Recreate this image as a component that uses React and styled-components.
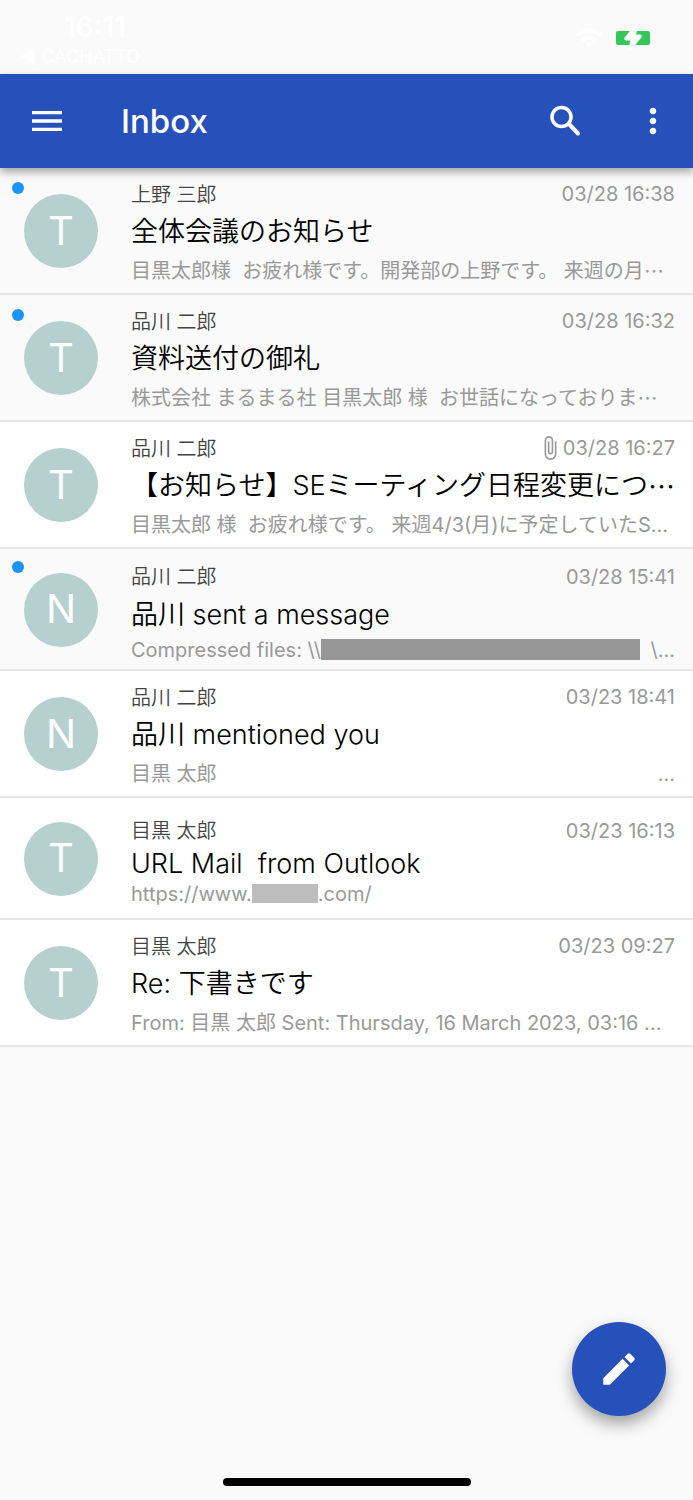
import React from "react";
import styled, { createGlobalStyle } from "styled-components";
import { MdMenu, MdMoreVert, MdEdit, MdAttachFile } from "react-icons/md";

const mails = [
  {
    id: 1,
    initial: "T",
    sender: "上野 三郎",
    date: "03/28 16:38",
    subject: "全体会議のお知らせ",
    preview: "目黒太郎様  お疲れ様です。開発部の上野です。 来週の月",
    previewCut: true,
    unread: true,
  },
  {
    id: 2,
    initial: "T",
    sender: "品川 二郎",
    date: "03/28 16:32",
    subject: "資料送付の御礼",
    preview: "株式会社 まるまる社 目黒太郎 様  お世話になっておりま",
    previewCut: true,
    unread: true,
  },
  {
    id: 3,
    initial: "T",
    sender: "品川 二郎",
    date: "03/28 16:27",
    subject: "【お知らせ】SEミーティング日程変更につ",
    subjectCut: true,
    preview: "目黒太郎 様  お疲れ様です。 来週4/3(月)に予定していたS...",
    attachment: true,
  },
  {
    id: 4,
    initial: "N",
    sender: "品川 二郎",
    date: "03/28 15:41",
    subject: "品川 sent a message",
    preview: "Compressed files: \\\\",
    redacted: "path",
    previewTail: "\\...",
    latinPreview: true,
    unread: true,
  },
  {
    id: 5,
    initial: "N",
    sender: "品川 二郎",
    date: "03/23 18:41",
    subject: "品川 mentioned you",
    preview: "目黒 太郎",
    previewTail: "...",
  },
  {
    id: 6,
    initial: "T",
    sender: "目黒 太郎",
    date: "03/23 16:13",
    subject: "URL Mail  from Outlook",
    preview: "https://www.",
    redacted: "domain",
    previewAfter: ".com/",
    latinSubject: true,
    latinPreview: true,
  },
  {
    id: 7,
    initial: "T",
    sender: "目黒 太郎",
    date: "03/23 09:27",
    subject: "Re: 下書きです",
    preview: "From: 目黒 太郎 Sent: Thursday, 16 March 2023, 03:16 ...",
  },
];

const WifiIcon = () => (
  <svg width="28" height="22" viewBox="0 0 28 22" fill="none" stroke="#fff" strokeWidth="4" aria-hidden="true">
    <path d="M2 8.500a17 17 0 0 1 24 0" />
    <path d="M7 13.500a10 10 0 0 1 14 0" />
    <path d="M14 21l-4-4.500a6 6 0 0 1 8 0z" fill="#fff" stroke="none" />
  </svg>
);

const BatteryIcon = () => (
  <svg width="42" height="24" viewBox="0 0 42 24" aria-hidden="true">
    <rect x="1" y="3" width="38" height="18" rx="5" fill="#fff" />
    <path d="M40 9q2 3 0 6z" fill="#fff" />
    <rect x="3" y="5" width="34" height="14" rx="2" fill="#34c759" />
    <path d="M21 0 12 11q-2 3 1 3.500h4L16 24h2L28 12q2-3-1-3.500h-4L25 0z" fill="#fff" />
  </svg>
);

const SearchIcon = () => (
  <svg width="40" height="40" viewBox="0 0 40 40" fill="none" stroke="currentColor" strokeWidth="3.500" aria-hidden="true">
    <circle cx="16.500" cy="16" r="9.500" />
    <path d="M24 23l9 9.500" strokeWidth="4" strokeLinecap="round" />
  </svg>
);

const MailItem = ({ mail }) => (
  <Row $unread={mail.unread}>
    <Avatar>
      {mail.unread && <UnreadDot />}
      {mail.initial}
    </Avatar>
    <Body>
      <Top>
        <Sender>{mail.sender}</Sender>
        <Received>
          {mail.attachment && <MdAttachFile size={26} />}
          {mail.date}
        </Received>
      </Top>
      <Subject $latin={mail.latinSubject}>
        {mail.subject}
        {mail.subjectCut && <WideDots>…</WideDots>}
      </Subject>
      <Preview $latin={mail.latinPreview}>
        {mail.preview}
        {mail.previewCut && <WideDots>…</WideDots>}
        {mail.redacted && <Redacted $kind={mail.redacted} />}
        {mail.previewAfter}
        {mail.previewTail && <Tail>{mail.previewTail}</Tail>}
      </Preview>
    </Body>
  </Row>
);

const App = () => {
  return (
    <Screen>
      <GlobalStyle />
      <StatusBar>
        <Clock>
          <Time>16:11</Time>
          <BackApp href="#cachatto">◀ CACHATTO</BackApp>
        </Clock>
        <Indicators>
          <WifiIcon />
          <BatteryIcon />
        </Indicators>
      </StatusBar>
      <Toolbar>
        <IconButton aria-label="Menu">
          <MdMenu size={40} />
        </IconButton>
        <Title>Inbox</Title>
        <IconButton aria-label="Search">
          <SearchIcon />
        </IconButton>
        <IconButton aria-label="More">
          <MdMoreVert size={40} />
        </IconButton>
      </Toolbar>
      <MailList>
        {mails.map((mail) => (
          <MailItem key={mail.id} mail={mail} />
        ))}
      </MailList>
      <Compose aria-label="Compose">
        <MdEdit size={42} />
      </Compose>
      <HomeIndicator />
    </Screen>
  );
};

const GlobalStyle = createGlobalStyle`
  * {
    box-sizing: border-box;
  }
  body {
    margin: 0;
    background-color: #fafafa;
    font-family: Inter, "Noto Sans CJK JP", sans-serif;
    color: #000;
  }
`;

const Screen = styled.div`
  display: flex;
  flex-direction: column;
  min-height: 100vh;
`;

const StatusBar = styled.div`
  display: flex;
  justify-content: space-between;
  align-items: flex-start;
  height: 74px;
  padding: 10px 38px 0 20px;
  color: #fff;
`;

const Clock = styled.div`
  display: flex;
  flex-direction: column;
  align-items: center;
`;

const Time = styled.span`
  padding-left: 30px;
  font-size: 28px;
  font-weight: 600;
  line-height: 34px;
`;

const BackApp = styled.a`
  font-size: 18px;
  line-height: 26px;
  color: inherit;
  text-decoration: none;
`;

const Indicators = styled.div`
  display: flex;
  align-items: center;
  gap: 10px;
  padding-top: 16px;
`;

const Toolbar = styled.header`
  position: relative;
  display: flex;
  align-items: center;
  height: 94px;
  padding: 0 16px 0 23px;
  color: #fff;
  background-color: #2751ba;
  box-shadow: 0 4px 8px rgba(0, 0, 0, 0.35);
`;

const IconButton = styled.button`
  display: flex;
  align-items: center;
  justify-content: center;
  width: 48px;
  height: 48px;
  padding: 0;
  border: 0;
  color: inherit;
  background: none;
  cursor: pointer;
  & + & {
    margin-left: 40px;
  }
`;

const Title = styled.h1`
  flex: 1;
  margin: 0;
  padding-left: 50px;
  font-size: 33px;
  font-weight: 500;
`;

const MailList = styled.ul`
  flex: 1;
  margin: 0;
  padding: 0;
  list-style: none;
`;

const Row = styled.li`
  display: flex;
  align-items: center;
  gap: 33px;
  min-height: 122px;
  padding: 5px 18px 4px 24px;
  border-bottom: 2px solid #e6e6e6;
  background-color: ${(props) => (props.$unread ? "#fafafa" : "#fff")};
`;

const Avatar = styled.div`
  position: relative;
  display: flex;
  flex-shrink: 0;
  align-items: center;
  justify-content: center;
  width: 74px;
  height: 74px;
  padding-bottom: 2px;
  border-radius: 50%;
  font-size: 40px;
  color: #fff;
  background-color: #b6d0cf;
`;

const UnreadDot = styled.span`
  position: absolute;
  top: -12px;
  left: -12px;
  width: 12px;
  height: 12px;
  border-radius: 50%;
  background-color: #1b93f5;
`;

const Body = styled.div`
  flex: 1;
  min-width: 0;
  padding-top: 4px;
`;

const Top = styled.div`
  display: flex;
  align-items: center;
  justify-content: space-between;
  height: 34px;
`;

const Sender = styled.span`
  padding-bottom: 2px;
  font-size: 20px;
  font-weight: 350;
  color: #444;
`;

const Received = styled.span`
  display: flex;
  align-items: center;
  font-size: 20px;
  color: #999;
`;

const Subject = styled.div`
  display: flex;
  overflow: hidden;
  font-size: 27px;
  font-weight: 350;
  line-height: ${(props) => (props.$latin ? "32px" : "42px")};
  white-space: pre;
`;

const Preview = styled.div`
  display: flex;
  align-items: center;
  overflow: hidden;
  font-size: 20px;
  line-height: ${(props) => (props.$latin ? "28px" : "36px")};
  white-space: pre;
  color: #999;
`;

const WideDots = styled.span`
  font-family: "Noto Sans CJK JP", sans-serif;
`;

const Redacted = styled.span`
  width: ${(props) => (props.$kind === "path" ? "319px" : "66px")};
  height: ${(props) => (props.$kind === "path" ? "21px" : "19px")};
  background-color: ${(props) => (props.$kind === "path" ? "#979797" : "#bdbdbd")};
`;

const Tail = styled.span`
  margin-left: auto;
`;

const Compose = styled.button`
  display: flex;
  align-items: center;
  align-self: flex-end;
  justify-content: center;
  width: 94px;
  height: 94px;
  margin-right: 27px;
  padding: 0;
  border: 0;
  border-radius: 50%;
  color: #fff;
  background-color: #2751ba;
  box-shadow: 0 8px 16px rgba(0, 0, 0, 0.35);
  cursor: pointer;
`;

const HomeIndicator = styled.div`
  align-self: center;
  width: 248px;
  height: 8px;
  margin: 62px 0 14px;
  border-radius: 4px;
  background-color: #000;
`;

export default App;
